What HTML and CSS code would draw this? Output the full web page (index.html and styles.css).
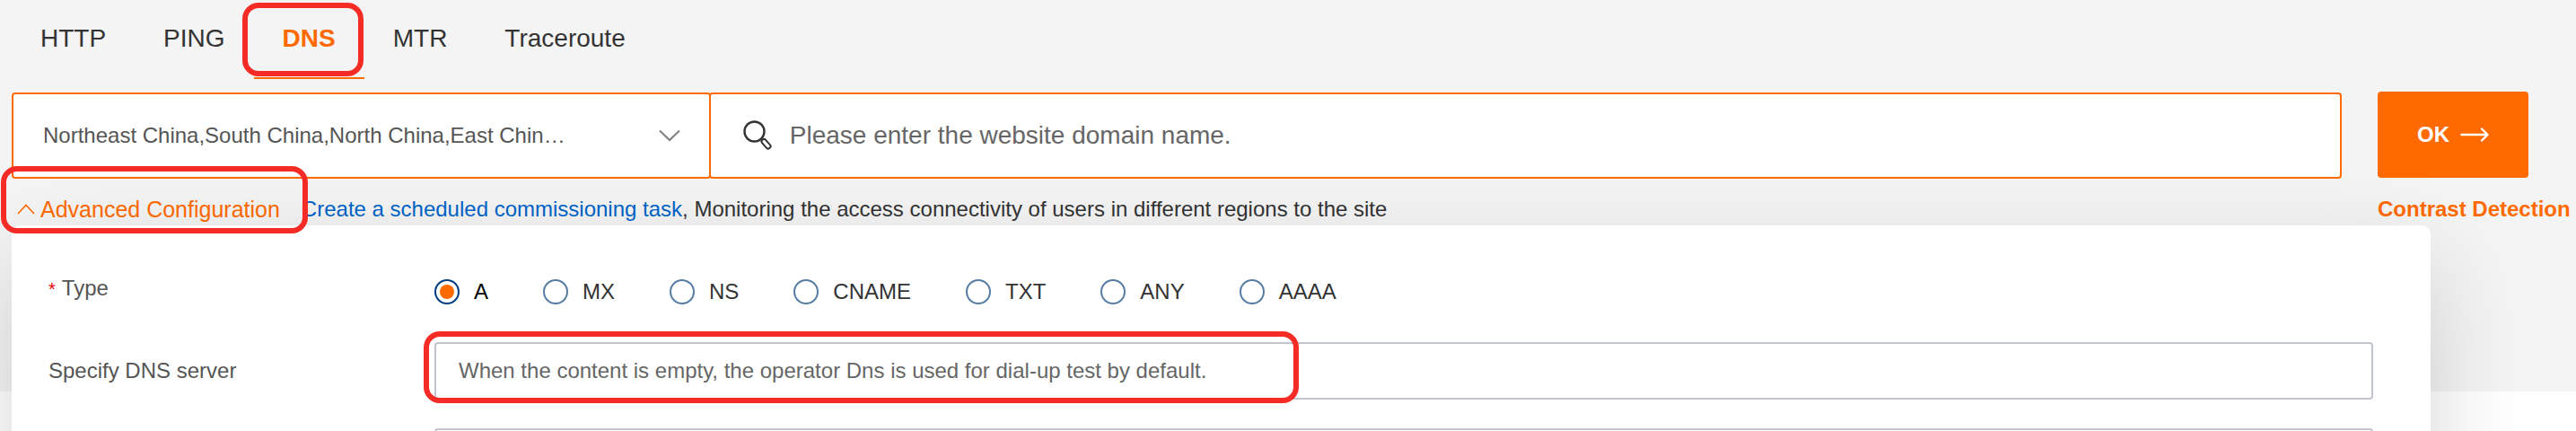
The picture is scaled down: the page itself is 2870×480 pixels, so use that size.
FILE: index.html
```
<!DOCTYPE html>
<html lang="en">
<head>
    <meta charset="UTF-8">
    <meta name="viewport" content="width=device-width, initial-scale=1.0">
    <title>DNS</title>
    <link rel="stylesheet" href="styles.css">
</head>
<body>

    <div class="dialtest">
        <!-- Test types -->
        <nav class="tabs">
            <a class="tab" href="#http">HTTP</a>
            <a class="tab" href="#ping">PING</a>
            <a class="tab active" href="#dns">DNS<span class="mark mark-tab"></span></a>
            <a class="tab" href="#mtr">MTR</a>
            <a class="tab" href="#traceroute">Traceroute</a>
        </nav>

        <form class="search">
            <div class="fields">
                <div class="region">
                    <select class="region-select" aria-label="Region">
                        <option>Northeast China,South China,North China,East Chin…</option>
                    </select>
                    <svg class="arrow-down" viewBox="0 0 24 14" width="24" height="14">
                        <path d="M1 1.5 L12 12 L23 1.5" fill="none" stroke="#808080" stroke-width="2"/>
                    </svg>
                </div>
                <label class="domain">
                    <svg viewBox="0 0 34 34" width="34" height="34" fill="none" stroke="#333">
                        <circle cx="12.5" cy="12.5" r="11" stroke-width="2.4"/>
                        <rect x="-2.6" y="0" width="5.2" height="12" rx="2.2" stroke-width="2" transform="translate(21.5 21.8) rotate(-42)"/>
                    </svg>
                    <input class="domain-input" type="text" placeholder="Please enter the website domain name." aria-label="Domain name">
                </label>
            </div>
            <button class="ok" type="button">OK
                <svg viewBox="0 0 32 16" width="32" height="16" fill="none" stroke="#fff" stroke-width="2.4" stroke-linecap="round" stroke-linejoin="round">
                    <path d="M1.5 8 H30 M24 1.5 L30.5 8 L24 14.5"/>
                </svg>
            </button>

            <div class="links">
                <a class="advanced" href="#advanced">
                    <svg viewBox="0 0 20 12" width="20" height="12">
                        <path d="M1 11 L10 1.5 L19 11" fill="none" stroke="#ff6a00" stroke-width="1.6"/>
                    </svg>
                    Advanced Configuration
                    <span class="mark mark-advanced"></span>
                </a>
                <p class="tip"><a href="#task">Create a scheduled commissioning task</a>, Monitoring the access connectivity of users in different regions to the site</p>
            </div>
            <a class="contrast" href="#contrast">Contrast Detection</a>
        </form>

        <!-- Advanced options dropdown -->
        <div class="panel">
            <div class="row">
                <span class="row-label" id="type-label"><span class="required">*</span>Type</span>
                <div class="radios" role="radiogroup" aria-labelledby="type-label">
                    <label class="radio"><input type="radio" name="type" checked>A</label>
                    <label class="radio"><input type="radio" name="type">MX</label>
                    <label class="radio"><input type="radio" name="type">NS</label>
                    <label class="radio"><input type="radio" name="type">CNAME</label>
                    <label class="radio"><input type="radio" name="type">TXT</label>
                    <label class="radio"><input type="radio" name="type">ANY</label>
                    <label class="radio"><input type="radio" name="type">AAAA</label>
                </div>
            </div>
            <div class="row">
                <label class="row-label" for="server">Specify DNS server</label>
                <div class="control">
                    <input class="text-input" id="server" type="text" placeholder="When the content is empty, the operator Dns is used for dial-up test by default.">
                    <span class="mark mark-server"></span>
                </div>
            </div>
            <div class="row">
                <span class="row-label"></span>
                <div class="control">
                    <input class="text-input" type="text" aria-label="Option">
                </div>
            </div>
        </div>
    </div>

</body>
</html>
```
FILE: styles.css
```
* {
    margin: 0;
    padding: 0;
    box-sizing: border-box;
}

html {
    overflow: hidden;
}

body {
    height: 100vh;
    overflow: hidden;
    background: #fff;
    color: #333;
    font-family: "Helvetica Neue", Helvetica, "Liberation Sans", Arial, sans-serif;
    font-size: 24px;
    line-height: 32px;
}

a {
    text-decoration: none;
}

input,
select,
button {
    font: inherit;
}

input::placeholder {
    color: #666;
    opacity: 1;
}

.dialtest {
    position: relative;
    padding-left: 13px;
    padding-bottom: 185px;
    background: #f4f4f4;
}

/* tabs */
.tabs {
    display: flex;
    margin-bottom: 14px;
}

.tab {
    position: relative;
    padding: 0 32px;
    border-bottom: 2px solid transparent;
    color: #333;
    font-size: 28px;
    line-height: 86px;
}

.tab.active {
    border-bottom-color: #ff6a00;
    color: #ff6a00;
    font-weight: bold;
}

/* search bar */
.search {
    display: grid;
    grid-template-columns: 1fr 221px;
    column-gap: 40px;
}

.fields {
    display: grid;
    grid-template-columns: 3fr 7fr;
    height: 97px;
    padding-top: 1px;
}

.region,
.domain {
    display: flex;
    align-items: center;
    background: #fff;
    border: 2px solid #ff6a00;
    border-radius: 4px;
}

.region {
    position: relative;
}

.region-select {
    width: 100%;
    height: 100%;
    padding: 0 80px 0 33px;
    appearance: none;
    background: transparent;
    border: none;
    color: #555;
}

.arrow-down {
    position: absolute;
    right: 32px;
    pointer-events: none;
}

.domain {
    gap: 18px;
    margin-left: -2px;
    padding: 0 36px;
}

.domain-input {
    flex: 1;
    border: none;
    background: transparent;
    font-size: 28px;
}

.ok {
    display: flex;
    align-items: center;
    justify-content: center;
    gap: 12px;
    width: 168px;
    height: 96px;
    border: none;
    border-radius: 4px;
    background: #ff6a00;
    color: #fff;
    font-weight: bold;
    cursor: pointer;
}

.links {
    display: flex;
    gap: 24px;
    padding: 18px 0 2px;
}

.advanced {
    position: relative;
    display: flex;
    align-items: center;
    gap: 6px;
    padding-left: 6px;
    color: #ff6a00;
    font-size: 25px;
}

.tip a {
    color: #0064c8;
}

.contrast {
    padding-top: 18px;
    color: #ff6a00;
    font-weight: bold;
    white-space: nowrap;
}

/* dropdown panel */
.panel {
    position: absolute;
    top: 251px;
    left: 13px;
    right: 162px;
    padding: 54px 64px 54px 41px;
    background: #fff;
    border-radius: 10px;
    box-shadow: 0 40px 112px rgba(0, 0, 0, 0.16);
}

.row {
    display: flex;
    align-items: center;
    min-height: 64px;
    margin-bottom: 32px;
}

.row:first-child {
    align-items: flex-start;
    min-height: 32px;
    margin-bottom: 40px;
}

.row-label {
    width: 430px;
    color: #555;
}

.required {
    margin-right: 7px;
    color: #d00;
    font-size: 20px;
}

.radios {
    display: flex;
    gap: 61px;
    padding-top: 4px;
}

.radio {
    display: flex;
    align-items: center;
    gap: 16px;
}

.radio:has(input:checked) {
    color: #000;
}

.radio input {
    width: 28px;
    height: 28px;
    appearance: none;
    border: 2px solid #577da4;
    border-radius: 50%;
}

.radio input:checked {
    padding: 4px;
    border-color: #003b7f;
    background: #ff6a00 content-box;
}

.control {
    position: relative;
    flex: 1;
}

.text-input {
    display: block;
    width: 100%;
    height: 64px;
    padding: 0 25px;
    border: 2px solid #c0c4cf;
    border-radius: 4px;
}

/* red highlight frames */
.mark {
    position: absolute;
    z-index: 2;
    border: 6px solid #f52b25;
    border-radius: 18px;
    pointer-events: none;
}

.mark-tab {
    top: 3px;
    right: 1px;
    bottom: 1px;
    left: -13px;
}

.mark-advanced {
    top: -32px;
    right: -31px;
    bottom: -11px;
    left: -12px;
}

.mark-server {
    top: -12px;
    bottom: -4px;
    left: -12px;
    width: 975px;
}
```
